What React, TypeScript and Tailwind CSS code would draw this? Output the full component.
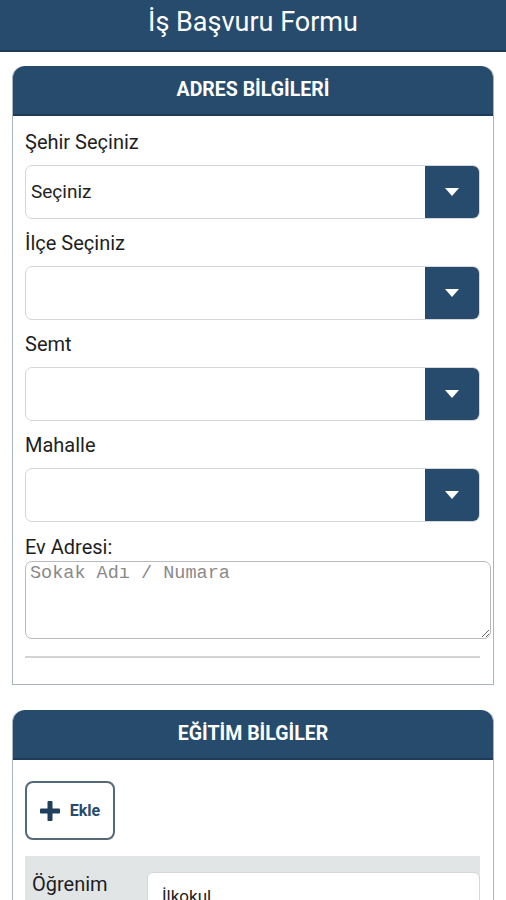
import React from 'react';

const Caret = () => (
  <svg width="14" height="8" viewBox="0 0 14 8" fill="white">
    <path d="M0 0 L14 0 L7 8 Z" />
  </svg>
);

const SelectBox: React.FC<{ value?: string }> = ({ value }) => (
  <div className="mt-[11px] flex h-[54px] w-full overflow-hidden rounded-[7px] border border-[#d3d7d9] bg-white">
    <div className="flex flex-1 items-center px-[5px] text-[19px] text-[#222]">{value}</div>
    <div className="flex w-[54px] items-center justify-center bg-[#274b6d]">
      <Caret />
    </div>
  </div>
);

const Field: React.FC<{ label: string; value?: string; first?: boolean }> = ({ label, value, first }) => (
  <div className={first ? '' : 'mt-[12px]'}>
    <div className="text-[20px] leading-[24px] text-[#1e1e1e]">{label}</div>
    <SelectBox value={value} />
  </div>
);

const CardHeader: React.FC<{ title: string }> = ({ title }) => (
  <div className="flex h-[50px] items-center justify-center rounded-t-[12px] border-b-2 border-[#1d3c58] bg-[#274b6d] text-[19.5px] font-bold text-white">
    {title}
  </div>
);

export default function App() {
  return (
    <div className="min-h-[900px] bg-white font-['Roboto',sans-serif]">
      <div className="flex h-[52px] items-center justify-center border-b-2 border-[#1b3a56] bg-[#274b6d] pb-[6px] text-[27px] text-white">
        İş Başvuru Formu
      </div>

      <div className="mx-[12px] mt-[14px] rounded-t-[12px] border border-t-0 border-[#a9b5b9]">
        <CardHeader title="ADRES BİLGİLERİ" />
        <div className="pb-[26px] pl-[12px] pr-[13px] pt-[14px]">
          <Field label="Şehir Seçiniz" value="Seçiniz" first />
          <Field label="İlçe Seçiniz" />
          <Field label="Semt" />
          <Field label="Mahalle" />
          <div className="mt-[13px] text-[20px] leading-[24px] text-[#1e1e1e]">Ev Adresi:</div>
          <textarea
            placeholder="Sokak Adı / Numara"
            className="mt-[2px] block h-[78px] w-[calc(100%+11px)] resize rounded-[7px] border border-[#b8bcbe] px-[4px] py-[1px] font-['Liberation_Mono',monospace] text-[18.5px] leading-[22px] placeholder:text-[#8a8a8a]"
          />
          <div className="mt-[17px] h-[2px] bg-[#d2d4d5]" />
        </div>
      </div>

      <div className="mx-[12px] mt-[25px] rounded-t-[12px] border border-t-0 border-[#a9b5b9]">
        <CardHeader title="EĞİTİM BİLGİLER" />
        <div className="pl-[12px] pr-[13px] pt-[21px]">
          <button className="flex h-[59px] w-[90px] items-center justify-center gap-[10px] rounded-[8px] border-2 border-[#556877] bg-white text-[16px] font-bold text-[#274b6d]">
            <svg width="20" height="20" viewBox="0 0 20 20" fill="#1f3f5c">
              <rect x="7.5" y="0" width="5" height="20" rx="1" />
              <rect x="0" y="7.5" width="20" height="5" rx="1" />
            </svg>
            Ekle
          </button>
          <div className="mt-[16px] flex h-[60px] items-start bg-[#e1e5e6] pl-[7px] pt-[16px]">
            <div className="w-[115px] text-[20px] leading-[24px] text-[#1e1e1e]">Öğrenim</div>
            <div className="flex h-[50px] flex-1 items-center rounded-[6px] border border-[#d3d7d9] bg-white px-[14px] text-[17px] text-[#222]">
              İlkokul
            </div>
          </div>
        </div>
      </div>
    </div>
  );
}
